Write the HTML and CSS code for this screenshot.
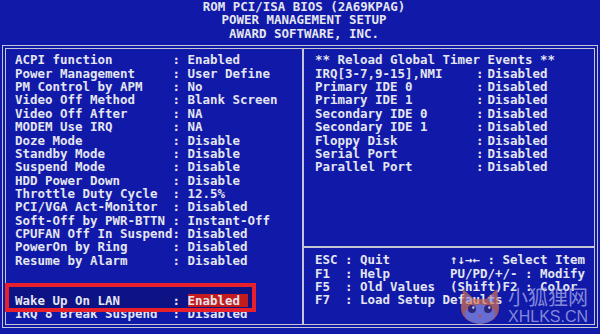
FILE: index.html
```html
<!DOCTYPE html>
<html lang="en">

<head>
    <meta charset="UTF-8">
    <meta name="viewport" content="width=device-width, initial-scale=1.0">
    <title>Power Management Setup</title>
    <link rel="stylesheet" href="styles.css">
</head>

<body>
    <div class="header">
        <div>ROM PCI/ISA BIOS (2A69KPAG)</div>
        <div>POWER MANAGEMENT SETUP</div>
        <div>AWARD SOFTWARE, INC.</div>
    </div>

    <div class="screen">
        <div class="panel left">
            <div class="row"><span class="key">ACPI function</span><span class="sep">:</span><span class="val">Enabled</span></div>
            <div class="row"><span class="key">Power Management</span><span class="sep">:</span><span class="val">User Define</span></div>
            <div class="row"><span class="key">PM Control by APM</span><span class="sep">:</span><span class="val">No</span></div>
            <div class="row"><span class="key">Video Off Method</span><span class="sep">:</span><span class="val">Blank Screen</span></div>
            <div class="row"><span class="key">Video Off After</span><span class="sep">:</span><span class="val">NA</span></div>
            <div class="row"><span class="key">MODEM Use IRQ</span><span class="sep">:</span><span class="val">NA</span></div>
            <div class="row"><span class="key">Doze Mode</span><span class="sep">:</span><span class="val">Disable</span></div>
            <div class="row"><span class="key">Standby Mode</span><span class="sep">:</span><span class="val">Disable</span></div>
            <div class="row"><span class="key">Suspend Mode</span><span class="sep">:</span><span class="val">Disable</span></div>
            <div class="row"><span class="key">HDD Power Down</span><span class="sep">:</span><span class="val">Disable</span></div>
            <div class="row"><span class="key">Throttle Duty Cycle</span><span class="sep">:</span><span class="val">12.5%</span></div>
            <div class="row"><span class="key">PCI/VGA Act-Monitor</span><span class="sep">:</span><span class="val">Disabled</span></div>
            <div class="row"><span class="key">Soft-Off by PWR-BTTN</span><span class="sep">:</span><span class="val">Instant-Off</span></div>
            <div class="row"><span class="key">CPUFAN Off In Suspend</span><span class="sep">:</span><span class="val">Disabled</span></div>
            <div class="row"><span class="key">PowerOn by Ring</span><span class="sep">:</span><span class="val">Disabled</span></div>
            <div class="row"><span class="key">Resume by Alarm</span><span class="sep">:</span><span class="val">Disabled</span></div>
            <div class="row"></div>
            <div class="row"></div>
            <div class="row selected"><span class="key">Wake Up On LAN</span><span class="sep">:</span><span class="val">Enabled</span></div>
            <div class="row"><span class="key">IRQ 8 Break Suspend</span><span class="sep">:</span><span class="val">Disabled</span></div>
        </div>

        <div class="panel right">
            <div class="events">
                <div class="title">** Reload Global Timer Events **</div>
                <div class="row"><span class="key">IRQ[3-7,9-15],NMI</span><span class="sep">:</span><span class="val">Disabled</span></div>
                <div class="row"><span class="key">Primary IDE 0</span><span class="sep">:</span><span class="val">Disabled</span></div>
                <div class="row"><span class="key">Primary IDE 1</span><span class="sep">:</span><span class="val">Disabled</span></div>
                <div class="row"><span class="key">Secondary IDE 0</span><span class="sep">:</span><span class="val">Disabled</span></div>
                <div class="row"><span class="key">Secondary IDE 1</span><span class="sep">:</span><span class="val">Disabled</span></div>
                <div class="row"><span class="key">Floppy Disk</span><span class="sep">:</span><span class="val">Disabled</span></div>
                <div class="row"><span class="key">Serial Port</span><span class="sep">:</span><span class="val">Disabled</span></div>
                <div class="row"><span class="key">Parallel Port</span><span class="sep">:</span><span class="val">Disabled</span></div>
            </div>
            <div class="help">
                <div class="line">ESC : Quit        ↑↓→← : Select Item</div>
                <div class="line">F1  : Help        PU/PD/+/- : Modify</div>
                <div class="line">F5  : Old Values  (Shift)F2 : Color</div>
                <div class="line">F7  : Load Setup Defaults</div>
            </div>
        </div>
    </div>

    <!-- red marker drawn over the selected item -->
    <div class="mark"></div>

    <!-- site watermark -->
    <div class="watermark">
        <svg class="fox" width="42" height="36" viewBox="0 0 42 36">
            <path d="M4 1 L15 11 L27 11 L38 1 L40 19 Q40 34 21 36 Q2 34 2 19 Z" fill="#d8744f" />
            <ellipse cx="21" cy="26" rx="15" ry="9.5" fill="#8d92e6" />
            <path d="M7 6 L13 12 L8 15 Z M35 6 L29 12 L34 15 Z" fill="#8d92e6" />
            <circle cx="13" cy="21" r="4" fill="#3a2c6c" />
            <circle cx="29" cy="21" r="4" fill="#3a2c6c" />
            <circle cx="14.3" cy="19.6" r="1.3" fill="#ffffff" />
            <circle cx="30.3" cy="19.6" r="1.3" fill="#ffffff" />
            <path d="M18.5 27 L23.5 27 L21 30 Z" fill="#e06a6a" />
        </svg>
        <div class="wm-text">
            <div class="wm-cn">小狐狸网</div>
            <div class="wm-en">XHLKS.CN</div>
        </div>
    </div>
</body>

</html>
```

FILE: styles.css
```css
body {
    margin: 0;
    width: 600px;
    height: 334px;
    overflow: hidden;
    background-color: #1019a8;
    color: #e4e6f0;
    font-family: "DejaVu Sans Mono", "Liberation Mono", monospace;
    font-weight: bold;
    font-size: 12.46px;
    line-height: 13.36px;
}

.header {
    height: 40px;
    padding-left: 8px;
    text-align: center;
}

.screen {
    box-sizing: border-box;
    width: 596px;
    height: 283px;
    margin: 5px 0 0 2px;
    border: 4px double #c4c6d6;
    display: grid;
    grid-template-columns: 298px 1fr;
}

.panel.left {
    padding: 4.4px 0 0 9px;
    border-right: 2px solid #c4c6d6;
}

.row {
    display: grid;
    height: 13.36px;
    white-space: pre;
}

.left .row {
    grid-template-columns: 157.5px 15px auto;
}

.right .row {
    grid-template-columns: 161px 11.5px auto;
}

.events {
    box-sizing: border-box;
    height: 199px;
    padding: 4.4px 0 0 11px;
    border-bottom: 2px solid #c4c6d6;
}

.title {
    white-space: pre;
}

.help {
    padding: 5.3px 0 0 11px;
}

.help .line {
    white-space: pre;
}

.row.selected {
    position: relative;
    z-index: 2;
}

.row.selected .val {
    width: 60px;
    background-color: #c41c1c;
}

.mark {
    position: absolute;
    left: 5px;
    top: 283px;
    width: 243px;
    height: 21px;
    border: 4px solid #e8202c;
    background-color: rgba(10, 10, 70, 0.35);
    z-index: 1;
}

.watermark {
    position: absolute;
    left: 459px;
    top: 285px;
    display: flex;
    gap: 7px;
    opacity: 0.7;
    z-index: 3;
}

.fox {
    margin-top: 3px;
}

.wm-text {
    font-weight: normal;
    color: #b4b8ee;
}

.wm-cn {
    font-family: "Noto Sans CJK SC", sans-serif;
    font-size: 20px;
    line-height: 24px;
}

.wm-en {
    font-family: "Liberation Sans", sans-serif;
    font-size: 16px;
    line-height: 15px;
}
```
